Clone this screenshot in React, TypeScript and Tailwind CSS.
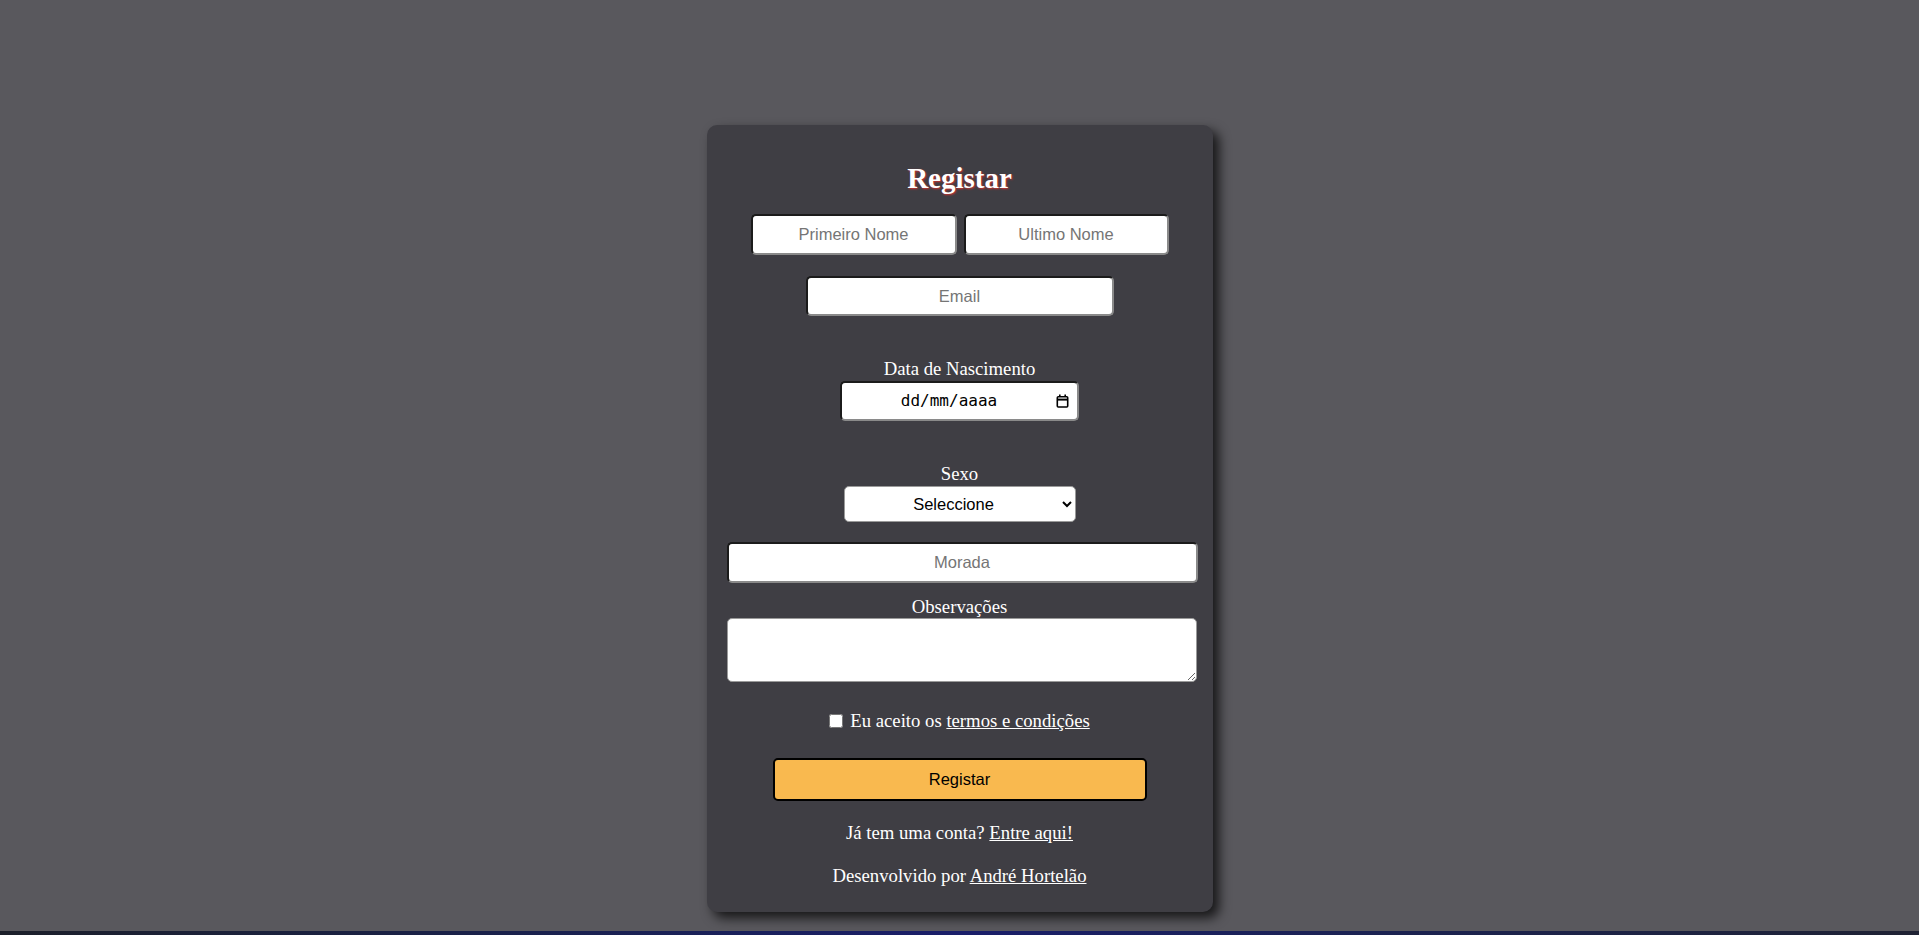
import React from "react";

const serif = "font-['Liberation_Serif',serif]";
const sans = "font-['Liberation_Sans',Arial,sans-serif]";

const field =
  "bg-white rounded-[5px] border-2 border-t-[#1b1b1b] border-l-[#1b1b1b] border-r-[#8a8a8a] border-b-[#8a8a8a] text-center text-[16.5px] text-black placeholder:text-[#757575] outline-none " +
  sans;

const CalendarIcon = () => (
  <svg width="13" height="14" viewBox="0 0 13 14" fill="none" stroke="#000" strokeWidth="1.6">
    <rect x="1.3" y="2.8" width="10.4" height="10.2" rx="1" />
    <line x1="1.3" y1="5.6" x2="11.7" y2="5.6" strokeWidth="2" />
    <line x1="3.8" y1="0.6" x2="3.8" y2="3" />
    <line x1="9.2" y1="0.6" x2="9.2" y2="3" />
  </svg>
);

const App = () => {
  return (
    <div className="w-full min-h-[935px] flex flex-col">
      <div className="h-[931px] bg-[#59585d] flex justify-center">
        <form
          className={`mt-[125px] self-start w-[506px] bg-[#3f3e44] rounded-[10px] shadow-[6px_6px_12px_rgba(0,0,0,0.75)] flex flex-col items-center pt-[37px] pb-[25px] text-white ${serif}`}
          onSubmit={(e) => e.preventDefault()}
        >
          <h2 className="text-[29px] leading-[32px] font-bold [text-shadow:1px_1px_2px_#d0312d]">
            Registar
          </h2>

          <div className="mt-[20px] flex gap-[7px]">
            <input className={`${field} w-[206px] h-[41px]`} placeholder="Primeiro Nome" />
            <input className={`${field} w-[205px] h-[41px]`} placeholder="Ultimo Nome" />
          </div>

          <input className={`${field} mt-[21px] w-[308px] h-[40px]`} placeholder="Email" />

          <label className="mt-[42px] text-[18.72px] leading-[22px]">Data de Nascimento</label>
          <div className="mt-[1px] w-[239px] h-[40px] bg-white rounded-[5px] border-2 border-t-[#1b1b1b] border-l-[#1b1b1b] border-r-[#8a8a8a] border-b-[#8a8a8a] flex items-center pr-[8px]">
            <span className="flex-1 text-center font-['DejaVu_Sans_Mono',monospace] text-[16px] text-black">
              dd/mm/aaaa
            </span>
            <CalendarIcon />
          </div>

          <label className="mt-[42px] text-[18.72px] leading-[22px]">Sexo</label>
          <select
            className={`mt-[1px] w-[232px] h-[36px] bg-white rounded-[5px] border border-[#9a9a9a] text-[16.5px] leading-[20px] text-black [text-align-last:center] px-[4px] ${sans}`}
            defaultValue=""
          >
            <option value="">Seleccione</option>
            <option value="m">Masculino</option>
            <option value="f">Feminino</option>
          </select>

          <input className={`${field} mt-[20px] w-[471px] h-[41px] ml-[5px]`} placeholder="Morada" />

          <label className="mt-[13px] text-[18.72px] leading-[22px]">Observações</label>
          <textarea
            className={`w-[470px] h-[64px] ml-[4px] bg-white rounded-[5px] border border-[#9a9a9a] text-black ${sans}`}
          />

          <div className="mt-[28px] flex items-center text-[18.72px] leading-[22px]">
            <input type="checkbox" className="w-[14px] h-[14px] mr-[7px] accent-white" />
            <span>
              Eu aceito os <a href="#" className="underline">termos e condições</a>
            </span>
          </div>

          <button
            type="submit"
            className={`mt-[26px] w-[374px] h-[43px] bg-[#f9b94f] border-2 border-black rounded-[5px] text-[16.5px] text-black ${sans}`}
          >
            Registar
          </button>

          <p className="mt-[21px] text-[18.72px] leading-[22px]">
            Já tem uma conta? <a href="#" className="underline">Entre aqui!</a>
          </p>

          <p className="mt-[21px] text-[18.72px] leading-[22px]">
            Desenvolvido por <a href="#" className="underline">André Hortelão</a>
          </p>
        </form>
      </div>
      <div className="h-[4px] bg-gradient-to-r from-[#1c1f2a] via-[#1a1e6a] to-[#1f2233]" />
    </div>
  );
};

export default App;
